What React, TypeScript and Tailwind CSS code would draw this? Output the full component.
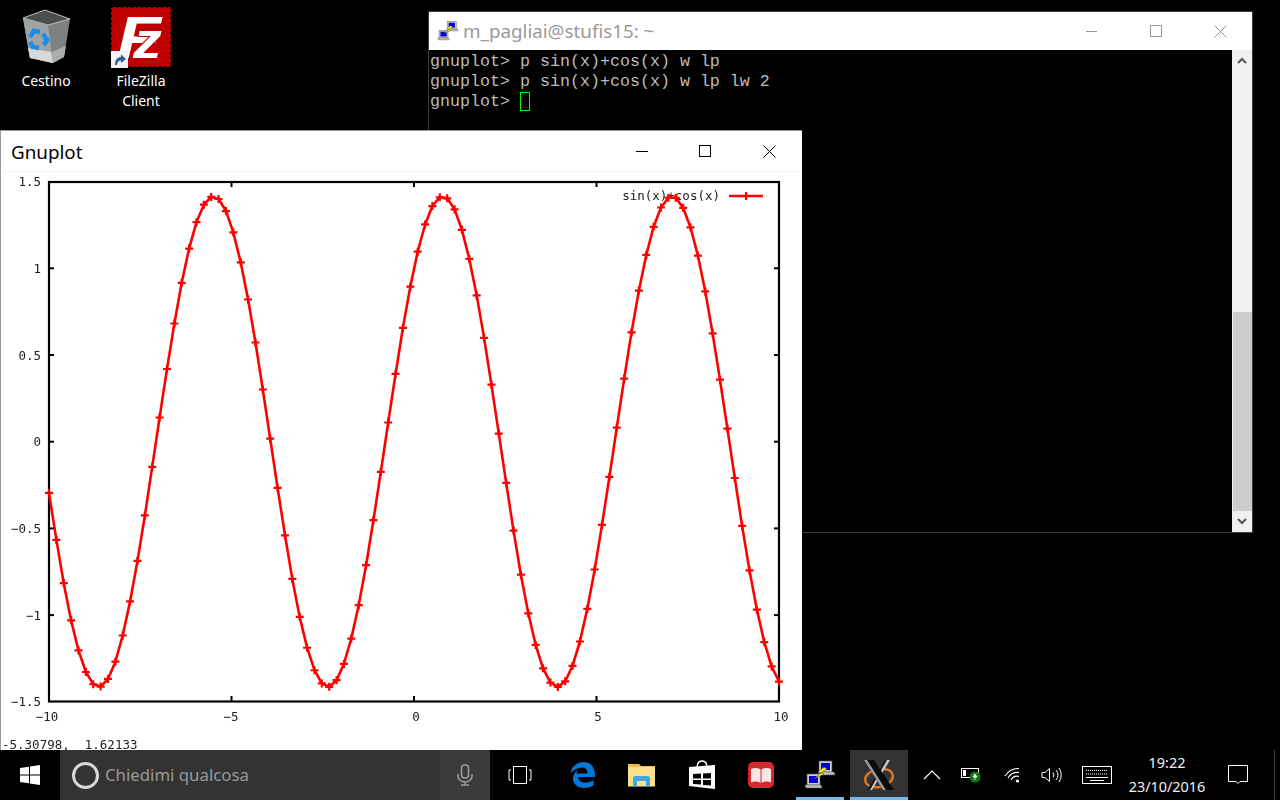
import React from "react";

const ui = "font-['Noto_Sans','Open_Sans',sans-serif]";

// plot scale, in page pixels
const px = (x: number) => 49 + (x + 10) * 36.5;
const py = (y: number) => 441.7 - y * 173.4;
const f = (x: number) => Math.sin(x) + Math.cos(x);

const samples = Array.from({ length: 100 }, (_, i) => {
  const x = -10 + (i * 20) / 99;
  return [px(x), py(f(x))];
});
const curve = samples.map(([x, y]) => `${x.toFixed(1)},${y.toFixed(1)}`).join(" ");

const xTicks = [-5, 0, 5];
const yTicks = [1, 0.5, 0, -0.5, -1];
const yLabels = ["1.5", "1", "0.5", "0", "\u22120.5", "\u22121", "\u22121.5"];
const xLabels: [string, number][] = [["\u221210", 47], ["\u22125", 231], ["0", 416], ["5", 598], ["10", 781]];

function Plot() {
  return (
    <svg width="800" height="578" viewBox="1 172 800 578" className="block blur-[0.35px]">
      <g fontFamily="'DejaVu Sans Mono', monospace" fontSize="12.5" fill="#222">
        {yLabels.map((t, i) => (
          <text key={t} x="41" y={py(1.5 - i * 0.5) + 4.5} textAnchor="end">{t}</text>
        ))}
        {xLabels.map(([t, x]) => (
          <text key={t} x={x} y="721" textAnchor="middle">{t}</text>
        ))}
        <text x="720" y="200" textAnchor="end">sin(x)+cos(x)</text>
        <text x="2" y="749" xmlSpace="preserve" className="whitespace-pre">{"-5.30798,  1.62133"}</text>
      </g>
      <rect x="49" y="182" width="730" height="519.5" fill="none" stroke="#000" strokeWidth="2.2" />
      {xTicks.map((t) => (
        <g key={t} stroke="#000" strokeWidth="2">
          <line x1={px(t)} x2={px(t)} y1="182" y2="187" />
          <line x1={px(t)} x2={px(t)} y1="696" y2="701" />
        </g>
      ))}
      {yTicks.map((t) => (
        <g key={t} stroke="#000" strokeWidth="2">
          <line x1="49" x2="54" y1={py(t)} y2={py(t)} />
          <line x1="774" x2="779" y1={py(t)} y2={py(t)} />
        </g>
      ))}
      <polyline points={curve} fill="none" stroke="#f00" strokeWidth="2.6" strokeLinejoin="round" />
      {samples.map(([x, y], i) => (
        <path key={i} d={`M${x - 4} ${y}h8M${x} ${y - 4}v8`} stroke="#f00" strokeWidth="2.2" />
      ))}
      <line x1="729" x2="763" y1="196" y2="196" stroke="#f00" strokeWidth="2.6" />
      <path d="M746 192v8" stroke="#f00" strokeWidth="2.2" />
    </svg>
  );
}

function RecycleBin() {
  return (
    <svg width="50" height="56" viewBox="0 0 50 56">
      <path d="M2 10 L24 2 L49 11 L43 49 L32 55 L9 50 Z" fill="#7d8182" />
      <path d="M2 10 L24 2 L49 11 L27 17 Z" fill="#4a4e4f" stroke="#b9bcbc" strokeWidth="1" />
      <path d="M2 10 L27 17 L32 55 L9 50 Z" fill="#9ea3a5" />
      <path d="M7 40 L30 44 L32 55 L9 50 Z" fill="#d6d9da" />
      <path d="M30 44 L45 38 L43 49 L32 55 Z" fill="#a9adae" />
      <g fill="none" stroke="#1a8be8" strokeWidth="4.5">
        <path d="M9 29 L13 23 L19 24" />
        <path d="M22 26 L26 32 L23 37" />
        <path d="M18 40 L12 39 L9 34" />
      </g>
    </svg>
  );
}

function FileZilla() {
  return (
    <svg width="62" height="62" viewBox="0 0 62 62">
      <rect x="1" y="1" width="60" height="60" fill="#bf0000" />
      <rect x="1" y="1" width="60" height="60" fill="none" stroke="#000" strokeWidth="1.5" strokeDasharray="2 3" />
      <g fill="#fff" fontFamily="'Liberation Sans', sans-serif" fontWeight="700" fontStyle="italic">
        <text transform="translate(7 52) scale(1.2 1)" fontSize="60">F</text>
        <text transform="translate(23 52) scale(1.15 1)" fontSize="50" stroke="#bf0000" strokeWidth="2" paintOrder="stroke">z</text>
      </g>
      <rect x="1" y="45" width="17" height="17" fill="#f2f2f2" />
      <path d="M5 59 C5 53 8 51 11 51 L11 48.5 L16 53 L11 57 L11 54.5 C9 54.5 7 56 7 59 Z" fill="#2a5d9c" />
    </svg>
  );
}

function PuttyIcon({ size = 32 }: { size?: number }) {
  return (
    <svg width={size} height={size} viewBox="0 0 32 32">
      <rect x="15" y="2" width="13" height="11" fill="#ccc" stroke="#555" strokeWidth="0.6" />
      <rect x="17" y="4" width="9" height="7" fill="#0000d8" />
      <path d="M14 13 H30 L31 16 H16 Z" fill="#bbb" stroke="#666" strokeWidth="0.5" />
      <rect x="3" y="15" width="13" height="11" fill="#ccc" stroke="#555" strokeWidth="0.6" />
      <rect x="5" y="17" width="9" height="7" fill="#0000d8" />
      <path d="M1 26 H17 L18 29 H2 Z" fill="#bbb" stroke="#666" strokeWidth="0.5" />
      <path d="M20 8 L14 13 L17 14 L10 20 L20 15 L16.5 14 L23 10 Z" fill="#fff200" stroke="#333" strokeWidth="0.4" />
    </svg>
  );
}

function XIcon() {
  return (
    <svg width="32" height="32" viewBox="0 0 32 32">
      <ellipse cx="16" cy="19" rx="14" ry="9" fill="none" stroke="#dc7a22" strokeWidth="2.4" transform="rotate(-12 16 19)" />
      <path d="M22 1 H26 L8 31 H4 Z" fill="#1a1a1a" />
      <path d="M24 1 H27 L9 31 H7 Z" fill="#c8c8c8" />
      <path d="M1 1 H11 L31 31 H20 Z" fill="#0a0a0a" />
      <path d="M1 1 H4 L23 31 H20 Z" fill="#9a9a9a" />
    </svg>
  );
}

function TaskIcon({ w, active, children }: { w: string; active?: "open" | "focus"; children: React.ReactNode }) {
  return <div className={`relative flex h-full items-center justify-center ${w} ${active === "focus" ? "bg-[#333333]" : ""}`}>
    {children}
    {active && <div className="absolute bottom-0 left-0 right-0 h-[3px] bg-[#76b9ed]" />}
  </div>;
}

function Taskbar() {
  return (
    <div className={`absolute bottom-0 left-0 z-20 flex h-[50px] w-[1280px] items-center bg-black text-white ${ui}`}>
      <div className="flex h-full w-[60px] items-center justify-center">
        <svg width="20" height="20" viewBox="0 0 20 20" fill="#fff">
          <path d="M0 3 L9 1.7 V9.5 H0 Z M10 1.5 L20 0 V9.5 H10 Z M0 10.5 H9 V18.3 L0 17 Z M10 10.5 H20 V20 L10 18.5 Z" />
        </svg>
      </div>
      <div className="flex h-full w-[430px] items-center bg-[#333333]">
        <div className="ml-[12px] h-[27px] w-[27px] rounded-full border-[3px] border-[#d8d8d8]" />
        <span className="ml-[6px] flex-1 text-[16.8px] text-[#9a9a9a]">Chiedimi qualcosa</span>
        <div className="flex h-full w-[50px] items-center justify-center bg-[#3b3b3b]">
          <svg width="16" height="22" viewBox="0 0 16 22" fill="none" stroke="#a0a0a0" strokeWidth="1.5">
            <rect x="4.5" y="1" width="7" height="13" rx="3" />
            <path d="M1 10 v2 a7 6 0 0 0 14 0 v-2 M8 18 v3 M4 21 h8" />
          </svg>
        </div>
      </div>
      <TaskIcon w="w-[60px]">
        <svg width="24" height="18" viewBox="0 0 24 18" fill="none" stroke="#fff" strokeWidth="1">
          <rect x="5.5" y="0.5" width="13" height="17" />
          <path d="M3 4 H1 V14 H3 M21 4 H23 V14 H21" />
        </svg>
      </TaskIcon>
      <TaskIcon w="w-[60px] ml-[3px]">
        <svg width="26" height="26" viewBox="0 0 26 26">
          <path d="M0.5 11 C2 4 7 0 13.5 0 C21 0 25 5.5 25 13.5 V15 H8 C8.5 19 11.5 20.5 15 20.5 C18 20.5 21 19.7 23.5 18.2 V23.5 C21 25.2 17.5 26 14 26 C7.5 26 3 22 3 16.5 C3 13 5 10 8 8 C7 9.5 6.7 10.5 6.5 11.5 H17.5 C17.5 8 15.5 5.5 12.5 5.5 C8 5.5 3.5 8 0.5 11 Z" fill="#0078d7" />
        </svg>
      </TaskIcon>
      <TaskIcon w="w-[58px]">
        <svg width="28" height="24" viewBox="0 0 28 24">
          <path d="M0 1 H11 L13 3 H27 V6 H0 Z" fill="#e8c04e" />
          <rect x="0" y="4" width="27" height="19.5" fill="#fbe08e" />
          <path d="M5 23.5 V15 a2 2 0 0 1 2-2 H20 a2 2 0 0 1 2 2 V23.5 H18 V18 H9 V23.5 Z" fill="#3fa8e0" />
        </svg>
      </TaskIcon>
      <TaskIcon w="w-[60px] ml-px">
        <svg width="26" height="30" viewBox="0 0 26 30">
          <path d="M8 8 C8 2 11 1 13 1 C15 1 18 2 18 8" fill="none" stroke="#fff" strokeWidth="1.5" />
          <path d="M0 7 L26 5 V29 L0 26 Z" fill="#fff" />
          <path d="M4 14 L12 13.6 V18.5 H4 Z M14 13.5 L22 13 V18.5 H14 Z M4 20 H12 V24.5 L4 24 Z M14 20 H22 V25.5 L14 25 Z" fill="#000" />
        </svg>
      </TaskIcon>
      <TaskIcon w="w-[58px]">
        <svg width="26" height="26" viewBox="0 0 26 26">
          <rect width="26" height="26" rx="5" fill="#d9272e" />
          <path d="M3 7 C6 5.5 10 5.5 12.5 7.5 V21 C10 19 6 19 3 20.5 Z M13.5 7.5 C16 5.5 20 5.5 23 7 V20.5 C20 19 16 19 13.5 21 Z" fill="#fbe6e6" />
        </svg>
      </TaskIcon>
      <TaskIcon w="w-[48px] ml-[6px]" active="open"><PuttyIcon /></TaskIcon>
      <div className="w-[6px]" />
      <TaskIcon w="w-[58px]" active="focus"><XIcon /></TaskIcon>
      <div className="flex h-full w-[48px] items-center justify-center">
        <svg width="18" height="10" viewBox="0 0 18 10" fill="none" stroke="#fff" strokeWidth="1.2"><path d="M1 9 L9 1 L17 9" /></svg>
      </div>
      <div className="flex h-full w-[30px] items-center justify-center">
        <svg width="20" height="16" viewBox="0 0 20 16">
          <rect x="0.5" y="1.5" width="17" height="9" fill="none" stroke="#fff" />
          <rect x="2" y="3" width="3" height="6" fill="#fff" />
          <circle cx="14" cy="10" r="5.5" fill="#107c10" />
          <path d="M14 7 l2 3 h-4 Z M14 10 v3" fill="#fff" stroke="#fff" strokeWidth="0.8" />
        </svg>
      </div>
      <div className="flex h-full w-[54px] items-center justify-center">
        <svg width="18" height="16" viewBox="0 0 18 16" fill="none" stroke="#fff" strokeWidth="1.1">
          <path d="M1 9 A16 16 0 0 1 15 1.5 M4 11 A11 11 0 0 1 15 5.5 M7 13 A7 7 0 0 1 15 9.5" />
          <circle cx="13.5" cy="14" r="1.6" fill="#fff" stroke="none" />
        </svg>
      </div>
      <div className="flex h-full w-[22px] items-center justify-center">
        <svg width="21" height="16" viewBox="0 0 21 16" fill="none" stroke="#fff" strokeWidth="1" className="shrink-0">
          <path d="M1 5.5 H4 L8.5 1.5 V14.5 L4 10.5 H1 Z M12 5.5 a4 4 0 0 1 0 5 M15 3 a8 8 0 0 1 0 10 M18 1 a12 12 0 0 1 0 14" />
        </svg>
      </div>
      <div className="flex h-full w-[70px] items-center justify-center">
        <svg width="30" height="18" viewBox="0 0 30 18" fill="none" stroke="#fff">
          <rect x="0.5" y="0.5" width="29" height="17" />
          <path d="M4 4.5 H26 M4 8 H26" strokeDasharray="1 1" />
          <path d="M4 11.5 H26 M8 14.5 H22" />
        </svg>
      </div>
      <div className="flex w-[70px] flex-col items-center whitespace-nowrap text-[14.4px] leading-[24px] text-[#f0f0f0]">
        <span>19:22</span>
        <span>23/10/2016</span>
      </div>
      <div className="flex h-full w-[72px] items-center justify-center">
        <svg width="20" height="20" viewBox="0 0 20 20" fill="none" stroke="#fff" strokeWidth="1">
          <path d="M0.5 0.5 H19.5 V16.5 H12 L10 18.5 L8 16.5 H0.5 Z" />
        </svg>
      </div>
      <div className="h-full w-px bg-[#444]" />
    </div>
  );
}

function Terminal() {
  return (
    <div className="absolute left-[428px] top-[11px] flex h-[522px] w-[825px] flex-col border border-[#3a3a3a] bg-black">
      <div className={`flex h-[38px] shrink-0 items-center bg-white ${ui}`}>
        <div className="ml-[8px] mr-[4px]"><PuttyIcon size={22} /></div>
        <span className="text-[18.8px] text-[#999999]">m_pagliai@stufis15: ~</span>
        <div className="ml-auto flex items-center">
          <div className="mr-[53px] h-px w-[11px] bg-[#999]" />
          <div className="mr-[52px] h-[12px] w-[12px] border border-[#999]" />
          <svg width="13" height="13" viewBox="0 0 13 13" className="mr-[25px]" stroke="#999"><path d="M0.5 0.5 L12.5 12.5 M12.5 0.5 L0.5 12.5" /></svg>
        </div>
      </div>
      <div className="flex min-h-0 flex-1">
        <pre className="flex-1 pl-px pt-[2px] font-['Liberation_Mono',monospace] text-[16.67px] leading-[20px] text-[#bbbbbb]">
          {"gnuplot> p sin(x)+cos(x) w lp\ngnuplot> p sin(x)+cos(x) w lp lw 2\ngnuplot> "}
          <span className="inline-block h-[19px] w-[10px] border border-[#00ff00] align-[-5px]" />
        </pre>
        <div className="flex w-[20px] flex-col items-center bg-[#f0f0f0]">
          <div className="flex h-[20px] w-full items-center justify-center">
            <svg width="10" height="7" viewBox="0 0 10 7" fill="none" stroke="#555" strokeWidth="2"><path d="M1 6 L5 2 L9 6" /></svg>
          </div>
          <div className="flex-1" />
          <div className="h-[199px] w-[19px] self-end bg-[#cdcdcd]" />
          <div className="flex h-[21px] w-full items-center justify-center">
            <svg width="10" height="7" viewBox="0 0 10 7" fill="none" stroke="#555" strokeWidth="2"><path d="M1 1 L5 5 L9 1" /></svg>
          </div>
        </div>
      </div>
    </div>
  );
}

function GnuplotWindow() {
  return (
    <div className="absolute left-0 top-[130px] z-10 h-[620px] w-[802px] overflow-hidden border-l border-t border-[#999] bg-white">
      <div className={`flex h-[41px] items-center border-b border-[#f4f4f4] ${ui}`}>
        <span className="ml-[10px] mt-[3px] text-[18.8px] text-black">Gnuplot</span>
        <div className="ml-auto flex items-center">
          <div className="mr-[51px] h-px w-[12px] bg-black" />
          <div className="mr-[52px] h-[12px] w-[12px] border border-black" />
          <svg width="13" height="13" viewBox="0 0 13 13" className="mr-[26px]" stroke="#000"><path d="M0.5 0.5 L12.5 12.5 M12.5 0.5 L0.5 12.5" /></svg>
        </div>
      </div>
      <Plot />
    </div>
  );
}

export default function App() {
  return (
    <div className="relative h-[800px] w-[1280px] overflow-hidden bg-black">
      <div className={`absolute left-[6px] top-[8px] flex w-[80px] flex-col items-center text-center text-[14px] leading-[20px] text-white ${ui}`}>
        <RecycleBin />
        <span className="mt-[7px]">Cestino</span>
      </div>
      <div className={`absolute left-[101px] top-[6px] flex w-[80px] flex-col items-center text-center text-[14px] leading-[20px] text-white ${ui}`}>
        <FileZilla />
        <span className="mt-[3px]">FileZilla<br />Client</span>
      </div>
      <Terminal />
      <GnuplotWindow />
      <Taskbar />
    </div>
  );
}
